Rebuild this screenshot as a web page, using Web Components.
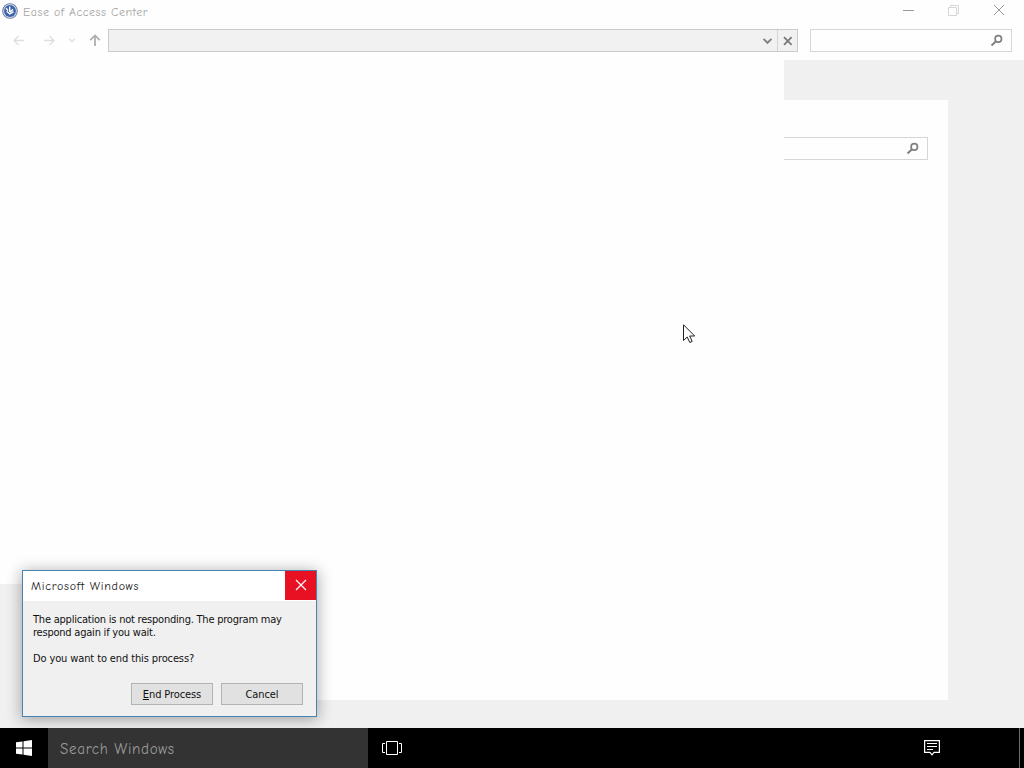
<!DOCTYPE html>
<html lang="en">
<head>
<meta charset="utf-8">
<title>Ease of Access Center</title>
<style>
    body {
        margin: 0;
        width: 1024px;
        height: 768px;
        overflow: hidden;
        font-family: "DejaVu Sans Condensed", "DejaVu Sans", sans-serif;
        --hand-font: "Comic Sans MS", "Comic Neue", "Lato", sans-serif;
    }
    .question { letter-spacing: -0.12px; }
</style>
</head>
<body>
<win-desktop>
    <app-window caption="Ease of Access Center"></app-window>
    <task-bar slot="bar" placeholder="Search Windows"></task-bar>
    <message-dialog slot="over" caption="Microsoft Windows">
        <span>The application is not responding. The program may<br>respond again if you wait.</span>
        <span slot="question" class="question">Do you want to end this process?</span>
        <push-button slot="actions"><u>E</u>nd Process</push-button>
        <push-button slot="actions">Cancel</push-button>
    </message-dialog>
    <mouse-pointer slot="over"></mouse-pointer>
</win-desktop>

<script>
// The whole screen: windows on top, the task bar below and floating things over both
class WinDesktop extends HTMLElement {
    constructor() {
        super();
        this.attachShadow({ mode: "open" });
        this.shadowRoot.innerHTML = `
            <style>
                :host {
                    display: grid;
                    grid-template-rows: 728px 40px;
                    position: relative;
                    width: 1024px;
                    height: 768px;
                    overflow: hidden;
                }
            </style>
            <slot></slot>
            <slot name="over"></slot>
            <slot name="bar"></slot>`;
    }
}
customElements.define("win-desktop", WinDesktop);

// Search field with the magnifier at its right end
class SearchField extends HTMLElement {
    constructor() {
        super();
        this.attachShadow({ mode: "open" });
        this.shadowRoot.innerHTML = `
            <style>
                :host {
                    display: flex;
                    align-items: center;
                    justify-content: flex-end;
                    box-sizing: border-box;
                    height: 23px;
                    padding-right: 8px;
                    border: 1px solid #d6d6d6;
                    background: #fefefe;
                }
            </style>
            <svg width="13" height="13" viewBox="0 0 13 13" fill="none" stroke="#808080">
                <circle cx="8.3" cy="4.9" r="3.2" stroke-width="1.7"/>
                <path d="M6 7.3L1.5 11.5" stroke-width="2"/>
            </svg>`;
    }
}
customElements.define("search-field", SearchField);

class AddressBar extends HTMLElement {
    constructor() {
        super();
        this.attachShadow({ mode: "open" });
        this.shadowRoot.innerHTML = `
            <style>
                :host {
                    display: flex;
                    box-sizing: border-box;
                    height: 23px;
                    border: 1px solid #cbcbcb;
                    background: #f1f1f1;
                }
                .field { flex: 1; }
                .button {
                    display: flex;
                    align-items: center;
                    justify-content: center;
                    width: 19px;
                }
                .stop { border-left: 1px solid #d4d4d4; }
            </style>
            <div class="field"></div>
            <div class="button">
                <svg width="11" height="11" viewBox="0 0 11 11" fill="none" stroke="#828282" stroke-width="1.9"><path d="M1.5 3.9L5.5 7.8L9.5 3.9"/></svg>
            </div>
            <div class="button stop">
                <svg width="11" height="11" viewBox="0 0 11 11" fill="none" stroke="#7a7a7a" stroke-width="1.8"><path d="M2 2.2L9.6 9.800M9.600 2.200L2 9.800"/></svg>
            </div>`;
    }
}
customElements.define("address-bar", AddressBar);

class AppWindow extends HTMLElement {
    constructor() {
        super();
        this.attachShadow({ mode: "open" });
        this.shadowRoot.innerHTML = `
            <style>
                :host {
                    display: grid;
                    grid-template-rows: 24px 36px 1fr;
                    background: #fefefe;
                }
                header {
                    display: flex;
                    align-items: center;
                    padding-left: 2px;
                }
                h1 {
                    flex: 1;
                    margin: 0 0 0 5px;
                    font: 400 12px/24px var(--hand-font);
                    letter-spacing: 0.5px;
                    color: #a5a5a5;
                    white-space: nowrap;
                }
                header .logo { margin-bottom: 2px; }
                header .controls {
                    display: flex;
                    align-items: center;
                    margin: 0 2px 4px 0;
                }
                header .controls svg { margin: 0 17px; }
                nav {
                    display: flex;
                    padding-top: 5px;
                }
                .arrows { width: 108px; height: 23px; }
                address-bar { width: 690px; }
                nav search-field { width: 202px; margin-left: 12px; }
                main {
                    display: grid;
                    grid-template: 668px / 1024px;
                    background: #f0f0f0;
                }
                main > div { grid-area: 1 / 1; }
                .page {
                    box-sizing: border-box;
                    margin: 40px 76px 28px;
                    padding: 37px 20px;
                    background: #fefefe;
                }
                /* part of the window that has not been painted again */
                .unpainted {
                    width: 784px;
                    height: 524px;
                    background: #fefefe;
                }
            </style>
            <header>
                <svg class="logo" width="16" height="16" viewBox="0 0 16 16">
                    <circle cx="8" cy="8" r="7.8" fill="#66759a"/>
                    <circle cx="8" cy="8" r="6.9" fill="#cbd8ec"/>
                    <circle cx="8" cy="8" r="5.9" fill="#3b62ab"/>
                    <path d="M4 5.3L6 7.4M7.7 3.5V9M4.700 8.200L7.800 11L11.500 8.700M7.800 9.200L11 6.400" fill="none" stroke="#fff" stroke-width="1.4"/>
                </svg>
                <h1></h1>
                <div class="controls">
                    <svg width="11" height="11" viewBox="0 0 11 11" stroke="#999"><path d="M0 5.5H11"/></svg>
                    <svg width="11" height="11" viewBox="0 0 11 11" fill="none" stroke="#d6d6d6"><path d="M.5 2.5H8.5V10.5H.5ZM2.5 2.5V.5H10.5V8.5H8.5"/></svg>
                    <svg width="12" height="12" viewBox="0 0 12 12" stroke="#999"><path d="M1 1L11 11M11 1L1 11"/></svg>
                </div>
            </header>
            <nav>
                <svg class="arrows" viewBox="0 0 108 23" fill="none" stroke="#dedede" stroke-width="1.3">
                    <path d="M24 11.5H14M18.5 7L14 11.5L18.5 16"/>
                    <path d="M44 11.5H54M49.5 7L54 11.5L49.5 16"/>
                    <path d="M69.5 10L72 12.5L74.5 10"/>
                    <path d="M95 17V6.5M90.2 11.2L95 6.4L99.8 11.2" stroke="#b0b0b0" stroke-width="1.8"/>
                </svg>
                <address-bar></address-bar>
                <search-field></search-field>
            </nav>
            <main>
                <div class="page"><search-field></search-field></div>
                <div class="unpainted"></div>
            </main>`;
    }

    connectedCallback() {
        this.shadowRoot.querySelector("h1").textContent = this.getAttribute("caption");
    }
}
customElements.define("app-window", AppWindow);

class PushButton extends HTMLElement {
    constructor() {
        super();
        this.attachShadow({ mode: "open" });
        this.shadowRoot.innerHTML = `
            <style>
                :host {
                    display: block;
                    box-sizing: border-box;
                    width: 82px;
                    height: 22px;
                    border: 1px solid #b3b3b3;
                    background: #e1e1e1;
                    line-height: 21px;
                    letter-spacing: -0.1px;
                    text-align: center;
                    white-space: nowrap;
                }
                ::slotted(u) { text-underline-offset: 1px; }
            </style>
            <slot></slot>`;
    }
}
customElements.define("push-button", PushButton);

class MessageDialog extends HTMLElement {
    constructor() {
        super();
        this.attachShadow({ mode: "open" });
        this.shadowRoot.innerHTML = `
            <style>
                :host {
                    display: block;
                    position: absolute;
                    left: 22px;
                    top: 570px;
                    box-sizing: border-box;
                    width: 295px;
                    height: 147px;
                    border: 1px solid #4685b2;
                    background: #f0f0f0;
                    box-shadow: 0 2px 14px 1px rgba(0, 0, 0, 0.32);
                    font-size: 11px;
                    line-height: 13px;
                    letter-spacing: -0.22px;
                    color: #111;
                }
                header {
                    display: flex;
                    align-items: flex-start;
                    height: 30px;
                    background: #fff;
                }
                h2 {
                    flex: 1;
                    margin: 0 0 0 8px;
                    font: 400 12px/30px var(--hand-font);
                    letter-spacing: 0.72px;
                    color: #222;
                }
                .close {
                    display: flex;
                    align-items: center;
                    justify-content: center;
                    width: 31px;
                    height: 29px;
                    background: #e81123;
                }
                .close svg { margin-bottom: 1px; }
                .text { padding: 12px 10px 0; white-space: nowrap; }
                .text p { margin: 0 0 13px; }
                .actions {
                    display: flex;
                    justify-content: flex-end;
                    gap: 8px;
                    padding: 5px 13px 0 0;
                }
            </style>
            <header>
                <h2></h2>
                <div class="close">
                    <svg width="12" height="12" viewBox="0 0 12 12" stroke="#fff" stroke-width="1.2"><path d="M1 1L11 11M11 1L1 11"/></svg>
                </div>
            </header>
            <div class="text">
                <p><slot></slot></p>
                <p><slot name="question"></slot></p>
            </div>
            <div class="actions"><slot name="actions"></slot></div>`;
    }

    connectedCallback() {
        this.shadowRoot.querySelector("h2").textContent = this.getAttribute("caption");
    }
}
customElements.define("message-dialog", MessageDialog);

class TaskBar extends HTMLElement {
    constructor() {
        super();
        this.attachShadow({ mode: "open" });
        this.shadowRoot.innerHTML = `
            <style>
                :host {
                    display: flex;
                    position: relative;
                    background: #000;
                }
                .item {
                    display: flex;
                    align-items: center;
                    justify-content: center;
                    width: 48px;
                }
                .search {
                    width: 308px;
                    padding-left: 12px;
                    background: #333;
                    font: 400 15px/42px var(--hand-font);
                    letter-spacing: 0.7px;
                    color: #999;
                }
                .notes { margin-left: auto; }
                .show-desktop {
                    width: 4px;
                    margin-left: 63px;
                    border-left: 1px solid #6c6c6c;
                }
            </style>
            <div class="item">
                <svg width="16" height="16" viewBox="0 0 16 16" fill="#fff"><path d="M0 2.3L6.5 1.4V7.5H0ZM7.500 1.200L16 0V7.500H7.500ZM0 8.500H6.500V14.600L0 13.700ZM7.500 8.500H16V16L7.500 14.800Z"/></svg>
            </div>
            <div class="search"></div>
            <div class="item">
                <svg width="20" height="14" viewBox="0 0 20 14" fill="none" stroke="#fff"><path d="M4.5 .5H15.5V13.5H4.5ZM3 2.5H.5V11.5H3M17 2.5H19.5V11.5H17"/></svg>
            </div>
            <div class="item notes">
                <svg width="16" height="16" viewBox="0 0 16 16" fill="none" stroke="#fff" stroke-width="1.2"><path d="M.6 .6H15.4V12.4H10L8 14.8L6 12.4H.6ZM3 3.5H13M3 6.5H13M3 9.5H9"/></svg>
            </div>
            <div class="show-desktop"></div>`;
    }

    connectedCallback() {
        this.shadowRoot.querySelector(".search").textContent = this.getAttribute("placeholder");
    }
}
customElements.define("task-bar", TaskBar);

class MousePointer extends HTMLElement {
    constructor() {
        super();
        this.attachShadow({ mode: "open" });
        this.shadowRoot.innerHTML = `
            <style>
                :host {
                    display: block;
                    position: absolute;
                    left: 683px;
                    top: 324px;
                    line-height: 0;
                }
            </style>
            <svg width="13" height="20" viewBox="0 0 13 20"><path d="M.5 .8V16.5L4.2 13L6.8 18.5L9.2 17.4L6.7 12H11.7Z" fill="#fff" stroke="#222"/></svg>`;
    }
}
customElements.define("mouse-pointer", MousePointer);
</script>
</body>
</html>
